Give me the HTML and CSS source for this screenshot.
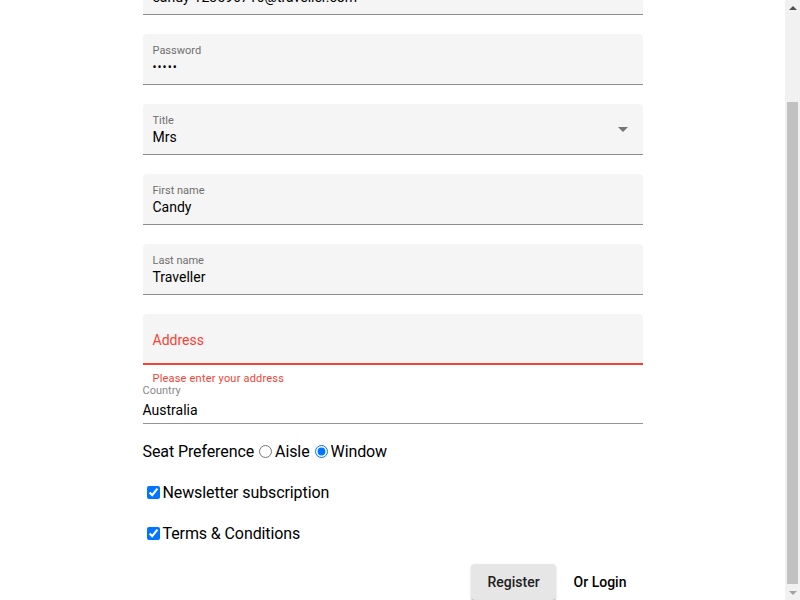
FILE: index.html
```html
<!DOCTYPE html>
<html lang="en">
<head>
<meta charset="utf-8">
<title>Register</title>
<link rel="stylesheet" href="styles.css">
</head>
<body>
<div class="shell">
<div class="page" id="page">
<form class="form">
  <div class="field">
    <span class="label">Email</span>
    <span class="value">candy-123596716@traveller.com</span>
  </div>
  <div class="field">
    <span class="label">Password</span>
    <span class="value dots">•••••</span>
  </div>
  <div class="field select">
    <span class="label">Title</span>
    <span class="value">Mrs</span>
    <span class="arrow"></span>
  </div>
  <div class="field">
    <span class="label">First name</span>
    <span class="value">Candy</span>
  </div>
  <div class="field">
    <span class="label">Last name</span>
    <span class="value">Traveller</span>
  </div>
  <div class="field invalid">
    <span class="placeholder">Address</span>
  </div>
  <div class="error-text">Please enter your address</div>
  <div class="plain">
    <span class="plain-label">Country</span>
    <span class="plain-value">Australia</span>
  </div>
  <div class="row">
    <span>Seat Preference</span><input class="radio" type="radio" name="seat"><span>Aisle</span><input class="radio" type="radio" name="seat" checked><span>Window</span>
  </div>
  <div class="row">
    <input class="check" type="checkbox" checked><span>Newsletter subscription</span>
  </div>
  <div class="row">
    <input class="check" type="checkbox" checked><span>Terms &amp; Conditions</span>
  </div>
  <div class="actions">
    <button class="btn raised" type="button">Register</button>
    <button class="btn flat" type="button">Or Login</button>
  </div>
</form>
</div>
<div class="scrollbar" aria-hidden="true">
  <div class="sb-btn"><span class="sb-up"></span></div>
  <div class="sb-track"><div class="sb-thumb"></div></div>
  <div class="sb-btn"><span class="sb-down"></span></div>
</div>
</div>
<script src="script.js"></script>
</body>
</html>
```
FILE: styles.css
```css
html, body {
  margin: 0;
  padding: 0;
  height: 100%;
  overflow: hidden;
}
body {
  font-family: Roboto, "Liberation Sans", sans-serif;
  color: #000;
  background: #fff;
}
.shell {
  display: flex;
  height: 100vh;
}
.page {
  flex: 1;
  height: 100vh;
  overflow: hidden;
}
.form {
  width: 500px;
  margin: 0 auto;
  padding: 73px 0 0;
}
.field {
  position: relative;
  box-sizing: border-box;
  height: 51px;
  margin-bottom: 19px;
  padding: 11px 10px 0;
  background: #f5f5f5;
  border-radius: 4px 4px 0 0;
  border-bottom: 1px solid #8d8d8d;
}
.label {
  display: block;
  font-size: 11px;
  line-height: 12px;
  color: #6e6e6e;
}
.value {
  display: block;
  margin-top: 1px;
  font-size: 14px;
  line-height: 18px;
}
.dots {
  font-size: 12px;
  letter-spacing: 1px;
}
.arrow {
  position: absolute;
  right: 15px;
  top: 23px;
  width: 0;
  height: 0;
  border-left: 5px solid transparent;
  border-right: 5px solid transparent;
  border-top: 5px solid #757575;
}
.field.invalid {
  margin-bottom: 0;
  padding-top: 17px;
  border-bottom: 2px solid #f44336;
}
.placeholder {
  display: block;
  font-size: 14px;
  line-height: 18px;
  color: #f44336;
}
.error-text {
  margin-top: 7px;
  padding-left: 10px;
  font-size: 11px;
  line-height: 13px;
  color: #f44336;
  letter-spacing: 0.2px;
}
.plain {
  border-bottom: 1px solid #949494;
}
.plain-label {
  display: block;
  font-size: 11px;
  line-height: 12px;
  color: #8a8a8a;
}
.plain-value {
  display: block;
  padding: 4px 0 4px;
  font-size: 14px;
  line-height: 18px;
}
.row {
  display: flex;
  align-items: center;
  height: 41px;
  font-size: 16px;
  letter-spacing: -0.1px;
}
.plain + .row {
  margin-top: 7px;
}
.radio {
  width: 13px;
  height: 13px;
  margin: 0 3px 0 5px;
}
.check {
  width: 13px;
  height: 13px;
  margin: 0 3px 0 4px;
}
.actions {
  display: flex;
  justify-content: flex-end;
  gap: 2px;
  margin-top: 10px;
}
.btn {
  height: 36px;
  padding: 0 16px;
  border: 0;
  border-radius: 4px;
  font-family: Roboto, "Liberation Sans", sans-serif;
  font-size: 14px;
  font-weight: 500;
  background: transparent;
  color: #000;
}
.raised {
  background: #e6e6e6;
  color: #212121;
  box-shadow: 0 2px 1px -1px rgba(0,0,0,.2), 0 1px 1px 0 rgba(0,0,0,.14), 0 1px 3px 0 rgba(0,0,0,.12);
}
.scrollbar {
  width: 15px;
  flex: none;
  display: flex;
  flex-direction: column;
  background: #f1f1f1;
}
.sb-btn {
  height: 15px;
  display: flex;
  align-items: center;
  justify-content: center;
}
.sb-up {
  width: 0;
  height: 0;
  border-left: 4px solid transparent;
  border-right: 4px solid transparent;
  border-bottom: 4px solid #505050;
}
.sb-down {
  width: 0;
  height: 0;
  border-left: 4px solid transparent;
  border-right: 4px solid transparent;
  border-top: 4px solid #a3a3a3;
}
.sb-track {
  flex: 1;
  padding-top: 87px;
}
.sb-thumb {
  width: 11px;
  height: 482px;
  margin-left: 2px;
  background: #c1c1c1;
}
```
FILE: script.js
```js
function toBottom() {
  var page = document.getElementById('page');
  page.scrollTop = page.scrollHeight;
}
toBottom();
window.addEventListener('load', toBottom);
```
